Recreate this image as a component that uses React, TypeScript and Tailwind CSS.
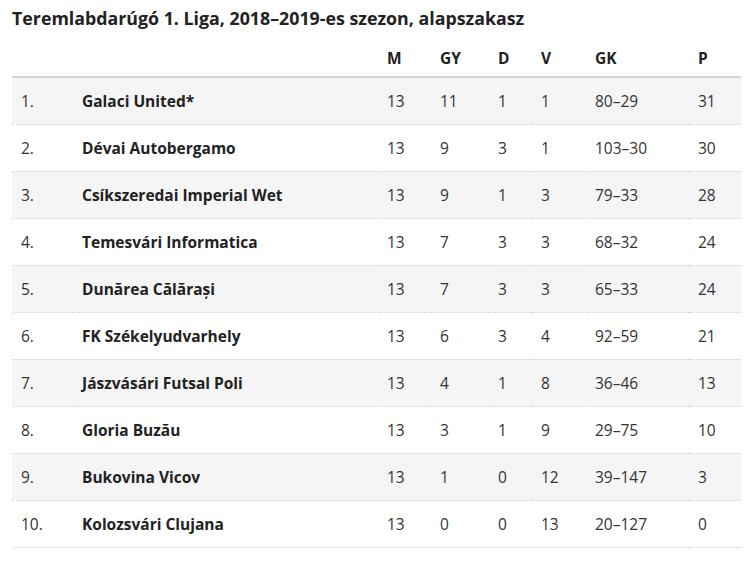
const rows = [
  ["1.", "Galaci United*", "13", "11", "1", "1", "80–29", "31"],
  ["2.", "Dévai Autobergamo", "13", "9", "3", "1", "103–30", "30"],
  ["3.", "Csíkszeredai Imperial Wet", "13", "9", "1", "3", "79–33", "28"],
  ["4.", "Temesvári Informatica", "13", "7", "3", "3", "68–32", "24"],
  ["5.", "Dunărea Călărași", "13", "7", "3", "3", "65–33", "24"],
  ["6.", "FK Székelyudvarhely", "13", "6", "3", "4", "92–59", "21"],
  ["7.", "Jászvásári Futsal Poli", "13", "4", "1", "8", "36–46", "13"],
  ["8.", "Gloria Buzău", "13", "3", "1", "9", "29–75", "10"],
  ["9.", "Bukovina Vicov", "13", "1", "0", "12", "39–147", "3"],
  ["10.", "Kolozsvári Clujana", "13", "0", "0", "13", "20–127", "0"],
];

const widths = ["w-[61px]", "w-[305px]", "w-[53px]", "w-[58px]", "w-[43px]", "w-[54px]", "w-[103px]", "w-[52px]"];
const headers = ["", "", "M", "GY", "D", "V", "GK", "P"];

export default function App() {
  return (
    <main className="min-h-screen bg-white px-[12px] pt-[5px] font-['Open_Sans',sans-serif] text-[#333]">
      <h2 className="text-[17.8px] font-bold leading-[26px] text-[#222]">
        Teremlabdarúgó 1. Liga, 2018–2019-es szezon, alapszakasz
      </h2>
      <table className="mt-[13px] w-[729px] table-fixed border-collapse text-[15.5px]">
        <thead>
          <tr className="h-[33px] border-b-2 border-[#d4d4d4]">
            {headers.map((h, i) => (
              <th key={i} className={`${widths[i]} pb-[2px] pl-[9px] text-left align-middle font-bold text-[#222]`}>
                {h}
              </th>
            ))}
          </tr>
        </thead>
        <tbody>
          {rows.map((r, i) => (
            <tr
              key={r[0]}
              className={`h-[47px] border-b border-dotted border-[#d0d0d0] ${i % 2 === 0 ? "bg-[#f5f5f5]" : "bg-white"}`}
            >
              {r.map((c, j) => (
                <td key={j} className={`pt-[2px] pl-[9px] align-middle ${j === 1 ? "font-bold text-[#222]" : ""}`}>
                  {c}
                </td>
              ))}
            </tr>
          ))}
        </tbody>
      </table>
    </main>
  );
}
